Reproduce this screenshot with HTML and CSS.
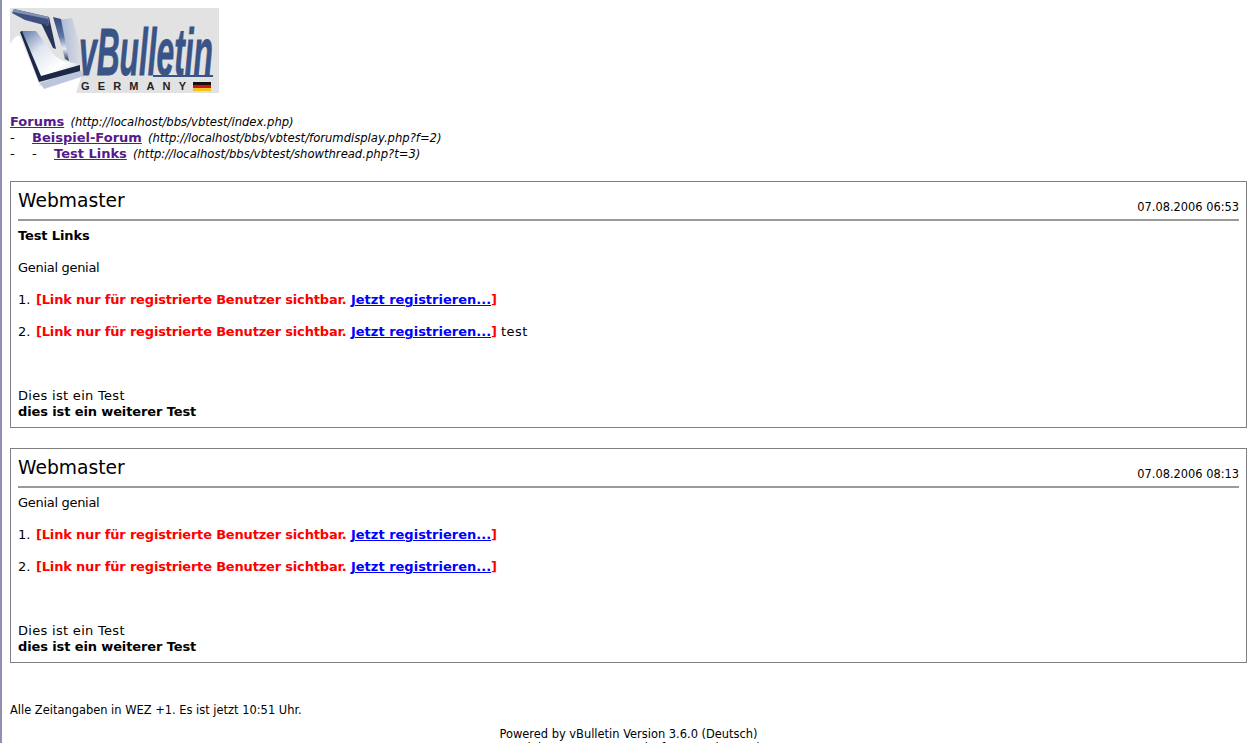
FILE: index.html
```html
<!DOCTYPE html>
<html lang="de">
<head>
<meta charset="utf-8">
<title>Test Links</title>
<link rel="stylesheet" href="styles.css">
</head>
<body>
<div class="logo">
<svg width="209" height="85" viewBox="0 0 209 85" xmlns="http://www.w3.org/2000/svg" role="img" aria-label="vBulletin Germany">
<defs>
<linearGradient id="steel" x1="0" y1="0" x2="0" y2="1"><stop offset="0" stop-color="#33497a"/><stop offset=".45" stop-color="#5f78a8"/><stop offset=".72" stop-color="#e8edf5"/><stop offset="1" stop-color="#22325a"/></linearGradient>
<linearGradient id="face" x1="0" y1="0" x2="1" y2="1"><stop offset="0" stop-color="#5d76a6"/><stop offset=".35" stop-color="#dfe5f0"/><stop offset=".7" stop-color="#ffffff"/><stop offset="1" stop-color="#c5d0e3"/></linearGradient>
<linearGradient id="glow" x1="0" y1="0" x2="1" y2="0"><stop offset="0" stop-color="#9fb2d4" stop-opacity=".9"/><stop offset="1" stop-color="#9fb2d4" stop-opacity="0"/></linearGradient>
</defs>
<rect width="209" height="85" fill="#e2e2e2"/>
<path d="M0 36 Q6 26 10 28 L30 78 L72 66 L66 85 H0Z" fill="#fff"/>
<path d="M30 75 L71 62 L74 68 L34 81Z" fill="#b9c6dc"/>
<path d="M48 12 L62 10 L74 52 L70 60 L60 54Z" fill="url(#glow)"/>
<path d="M2 5 L4 1 L39 9 L38 18 L30 16 L15 12Z" fill="#3f5180"/>
<path d="M4 1 L39 9 L38 11 L3 4Z" fill="#7f90b4"/>
<path d="M39 9 L46 41 L43 40 L31 15 L38 18Z" fill="#26355c"/>
<path d="M43 9 L51 11 L59 53 L55 51Z" fill="url(#steel)"/>
<path d="M11 23 L26 23 L45 48 L53 53 L68 56 L30 71Z" fill="url(#face)"/>
<path d="M10 24 L12 23 L31 68 L70 57 L70 63 L29 74Z" fill="#1c2846"/>
<text class="logo-name" transform="translate(69 67) scale(.481 1)">vBulletin</text>
<rect x="143" y="67" width="60" height="2" fill="#3a5487"/>
<text class="logo-word" x="71" y="82" textLength="105">GERMANY</text>
<rect x="183" y="74" width="18" height="3" fill="#111"/>
<rect x="183" y="77" width="18" height="3" fill="#d41414"/>
<rect x="183" y="80" width="18" height="3" fill="#f0c419"/>
</svg>
</div>
<nav class="crumbs">
<div><a class="crumb" href="#">Forums</a> <em>(http://localhost/bbs/vbtest/index.php)</em></div>
<div><span class="dash">-</span><a class="crumb" href="#">Beispiel-Forum</a> <em>(http://localhost/bbs/vbtest/forumdisplay.php?f=2)</em></div>
<div><span class="dash">-</span><span class="dash">-</span><a class="crumb" href="#">Test Links</a> <em>(http://localhost/bbs/vbtest/showthread.php?t=3)</em></div>
</nav>
<article class="post">
<header class="post-head"><span class="user">Webmaster</span><span class="date">07.08.2006 06:53</span></header>
<div class="post-body">
<p><strong>Test Links</strong></p>
<p class="greeting">Genial genial</p>
<p><span class="num">1.</span><span class="hidden-link">[Link nur für registrierte Benutzer sichtbar. <a href="#">Jetzt registrieren...</a>]</span></p>
<p><span class="num">2.</span><span class="hidden-link">[Link nur für registrierte Benutzer sichtbar. <a href="#">Jetzt registrieren...</a>]</span> <span class="tail">test</span></p>
<p class="spaced"><span class="closing">Dies ist ein Test</span><br><strong>dies ist ein weiterer Test</strong></p>
</div>
</article>
<article class="post">
<header class="post-head"><span class="user">Webmaster</span><span class="date">07.08.2006 08:13</span></header>
<div class="post-body">
<p class="greeting">Genial genial</p>
<p><span class="num">1.</span><span class="hidden-link">[Link nur für registrierte Benutzer sichtbar. <a href="#">Jetzt registrieren...</a>]</span></p>
<p><span class="num">2.</span><span class="hidden-link">[Link nur für registrierte Benutzer sichtbar. <a href="#">Jetzt registrieren...</a>]</span></p>
<p class="spaced"><span class="closing">Dies ist ein Test</span><br><strong>dies ist ein weiterer Test</strong></p>
</div>
</article>
<footer class="foot">
<p class="times">Alle Zeitangaben in WEZ +1. Es ist jetzt 10:51 Uhr.</p>
<p class="powered">Powered by vBulletin Version 3.6.0 (Deutsch)<br>Copyright ©2000-2006, Jelsoft Enterprises Ltd.</p>
</footer>
</body>
</html>
```
FILE: styles.css
```css
html { overflow: hidden; height: 100%; }
body {
  margin: 0;
  padding: 8px 8px 0 8px;
  border-left: 2px solid #8f8fb0;
  box-sizing: border-box;
  height: 743px;
  overflow: hidden;
  background: #fff;
  color: #000;
  font-family: "DejaVu Sans", Verdana, sans-serif;
  font-size: 13px;
  line-height: 16px;
}
.logo { height: 85px; }
.logo svg { display: block; }
.logo-name { font: italic bold 66px "Liberation Sans", sans-serif; fill: #3a5487; stroke: #3a5487; stroke-width: .8px; }
.logo-word { font: bold 11px "Liberation Sans", sans-serif; fill: #222; }
.crumbs { margin-top: 21px; }
.crumb { color: #551a8b; font-weight: bold; margin-right: 2px; }
.crumbs em { font-size: 11.6px; }
.dash { display: inline-block; width: 22px; }
.post {
  border: 1px solid #808080;
  margin-top: 19px;
  padding: 7px;
}
.post + .post { margin-top: 20px; }
.post-head {
  display: flex;
  justify-content: space-between;
  align-items: flex-end;
  border-bottom: 2px solid #9a9a9a;
  height: 30px;
}
.user { font-size: 18.7px; line-height: 24px; padding-bottom: 6px; }
.date { font-size: 11.4px; line-height: 14px; padding-bottom: 5px; }
.post-body { padding-top: 7px; }
.post-body p { margin: 0 0 16px; }
.post-body p.spaced { margin: 48px 0 0; }
.post-body strong { letter-spacing: -.12px; }
.greeting { letter-spacing: -.3px; }
.closing { letter-spacing: .3px; }
.num { display: inline-block; width: 18px; }
.hidden-link { color: #f00; font-weight: bold; letter-spacing: -.18px; }
.hidden-link a { color: #00f; letter-spacing: 0; }
.tail { letter-spacing: .5px; }
.foot { font-size: 11.45px; }
.times { margin: 39px 0 0; }
.powered { margin: 9px 0 0; text-align: center; line-height: 14px; }
```
